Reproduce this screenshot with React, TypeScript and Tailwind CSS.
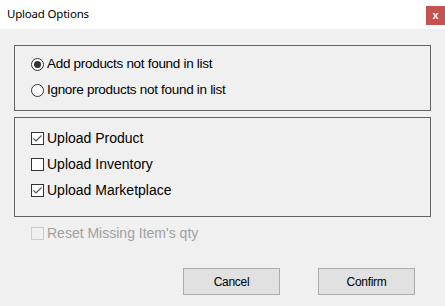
export default function App() {
  const body = { fontFamily: '"Liberation Sans", Arial, sans-serif' };

  return (
    <div className="w-[445px] h-[306px] bg-[#f0f0f0] flex flex-col overflow-hidden" style={body}>
      {/* Title bar */}
      <div className="h-[29px] bg-white flex items-start justify-between shrink-0">
        <span
          className="pl-[7px] pt-[6px] text-[11.5px] leading-[16px] tracking-[-0.2px] text-black"
          style={{ fontFamily: '"Noto Sans", "Open Sans", sans-serif' }}
        >
          Upload Options
        </span>
        <button className="mt-[6px] w-[19px] h-[19px] bg-[#c75050] text-white text-[11px] font-bold leading-none flex items-center justify-center">
          x
        </button>
      </div>

      <div className="pl-[14px] pr-[14px] pt-[16px] flex flex-col">
        {/* Radio group */}
        <div className="h-[66px] border border-[#646464] pt-[5px] pl-[16px] flex flex-col">
          <Radio checked label="Add products not found in list" />
          <Radio label="Ignore products not found in list" />
        </div>

        {/* Checkbox group */}
        <div className="mt-[6px] h-[100px] border border-[#646464] pt-[7px] pl-[16px] flex flex-col">
          <Check checked label="Upload Product" />
          <Check label="Upload Inventory" />
          <Check checked label="Upload Marketplace" />
        </div>

        <div className="mt-[3px] pl-[17px]">
          <Check disabled label="Reset Missing Item's qty" />
        </div>

        {/* Buttons */}
        <div className="mt-[22px] flex justify-end gap-[38px] pr-[16px]">
          <button className="w-[97px] h-[27px] bg-[#e1e1e1] border border-[#adadad] text-[12px] tracking-[-0.3px] text-black">
            Cancel
          </button>
          <button className="w-[97px] h-[27px] bg-[#e1e1e1] border border-[#adadad] text-[12px] tracking-[-0.3px] text-black">
            Confirm
          </button>
        </div>
      </div>
    </div>
  );
}

function Radio({ checked, label }: { checked?: boolean; label: string }) {
  return (
    <div className="h-[26px] flex items-center gap-[3px]">
      <span className="w-[13px] h-[13px] rounded-full border border-[#333] bg-white flex items-center justify-center">
        {checked && <span className="w-[7px] h-[7px] rounded-full bg-[#333]" />}
      </span>
      <span className="text-[13.5px] tracking-[-0.3px] text-black">{label}</span>
    </div>
  );
}

function Check({ checked, disabled, label }: { checked?: boolean; disabled?: boolean; label: string }) {
  return (
    <div className="h-[26px] flex items-center gap-[3px]">
      <span
        className={`w-[13px] h-[13px] border flex items-center justify-center ${
          disabled ? "border-[#cccccc] bg-[#f0f0f0]" : "border-[#333] bg-white"
        }`}
      >
        {checked && (
          <svg width="11" height="11" viewBox="0 0 11 11">
            <path d="M1.5 5.5 L4 8 L9.5 2.5" fill="none" stroke="#555" strokeWidth="1.2" />
          </svg>
        )}
      </span>
      <span className={`text-[14px] ${disabled ? "text-[#a0a0a0]" : "text-black"}`}>{label}</span>
    </div>
  );
}
